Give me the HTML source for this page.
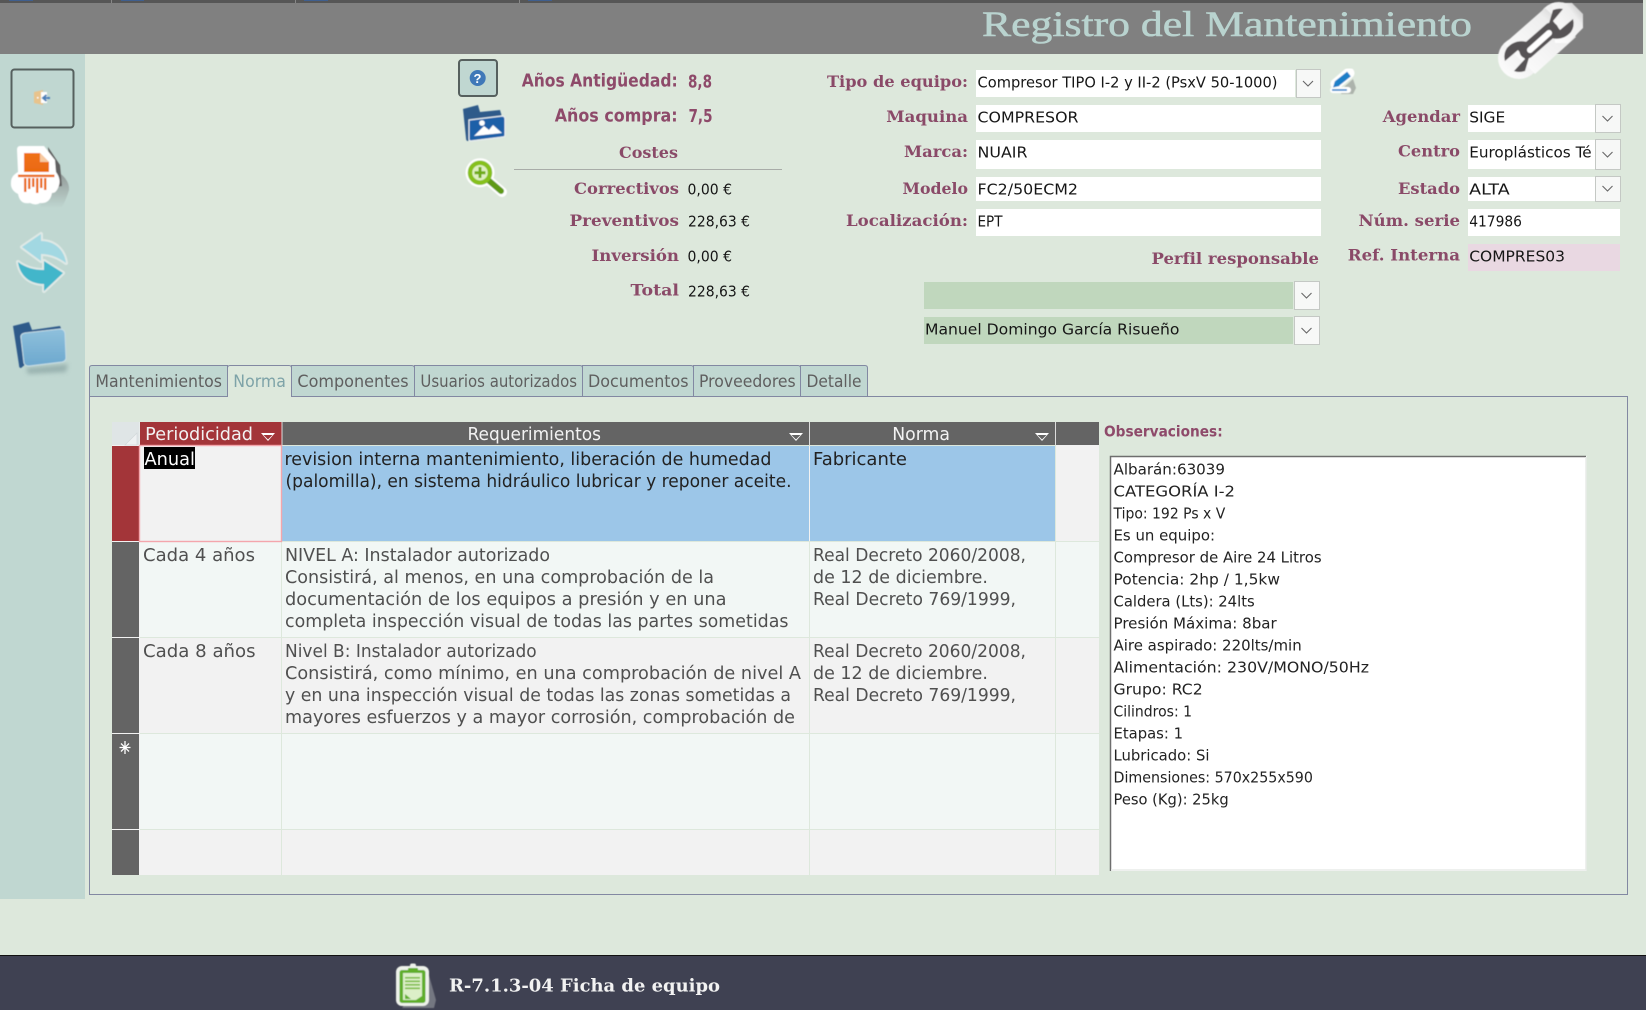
<!DOCTYPE html>
<html lang="es"><head><meta charset="utf-8"><title>Registro del Mantenimiento</title>
<style>
html,body{margin:0;padding:0;width:1646px;height:1010px;overflow:hidden;background:#dde8dc}
svg{display:block}
text{white-space:pre}
.g{font:17.5px "DejaVu Sans",sans-serif;fill:#505050}
.gs{font:17.5px "DejaVu Sans",sans-serif;fill:#222}
.h{font:17.5px "DejaVu Sans",sans-serif;fill:#f2f2f2}
.t{font:16.5px "DejaVu Sans",sans-serif;fill:#5f5f5f}
.f{font:15.5px "DejaVu Sans",sans-serif;fill:#161616}
.o{font:15.5px "DejaVu Sans",sans-serif;fill:#222}
.l{font:bold 16px "DejaVu Serif",serif;fill:#8a4a68}
.b{font:bold 18px "DejaVu Sans",sans-serif;fill:#8e4a6a}
</style></head><body>
<svg xmlns="http://www.w3.org/2000/svg" width="1646" height="1010" viewBox="0 0 1646 1010">
<defs>
<filter id="s" x="-20%" y="-20%" width="140%" height="140%"><feGaussianBlur stdDeviation=".45"/></filter>
<filter id="sh" x="-30%" y="-30%" width="160%" height="160%"><feGaussianBlur stdDeviation="2"/></filter>
<linearGradient id="fb" x1="0" y1="0" x2="0" y2="1"><stop offset="0" stop-color="#8fc0dc"/><stop offset="1" stop-color="#6ca8ce"/></linearGradient>
<linearGradient id="wr" x1="0" y1="1" x2="1" y2="0"><stop offset="0" stop-color="#fff"/><stop offset=".7" stop-color="#eee"/><stop offset="1" stop-color="#bbb"/></linearGradient>
<linearGradient id="or" x1="0" y1="0" x2="0" y2="1"><stop offset="0" stop-color="#f0701a"/><stop offset="1" stop-color="#ea6a10"/></linearGradient>
<linearGradient id="shd" x1="0" y1="0" x2="0" y2="1"><stop offset="0" stop-color="#8a8f8e"/><stop offset="1" stop-color="#c0d7d1"/></linearGradient>
</defs>

<!-- background -->
<rect width="1646" height="1010" fill="#dde8dc"/>
<rect x="0" y="0" width="1643" height="54" fill="#808080"/>
<rect x="0" y="0" width="1643" height="3" fill="#565656"/>
<g fill="#3f5f8f"><rect x="9" y="0" width="24" height="1"/><rect x="121" y="0" width="23" height="1"/><rect x="304" y="0" width="24" height="1"/><rect x="528" y="0" width="24" height="1"/></g>
<g fill="#888"><rect x="111" y="0" width="1" height="3"/><rect x="295" y="0" width="1" height="3"/><rect x="519" y="0" width="1" height="3"/></g>
<rect x="0" y="54" width="85" height="845" fill="#c0d7d1"/>
<rect x="0" y="956" width="1646" height="54" fill="#3f4152"/>
<rect x="0" y="955" width="1646" height="1" fill="#111"/>

<!-- title -->
<text x="982" y="36" textLength="490" lengthAdjust="spacingAndGlyphs" style="font:36px 'Liberation Serif',serif;fill:#b9d3cf;stroke:#b9d3cf;stroke-width:.55">Registro del Mantenimiento</text>

<!-- wrench -->
<g filter="url(#s)">
<g fill="url(#wr)" stroke="none">
<circle cx="1519" cy="58" r="21"/><circle cx="1559" cy="23" r="21"/>
<path d="M1504 44 L1545 8 L1576 37 L1535 74Z"/>
<path d="M1552 3 L1572 3 L1583 14 L1583 28 L1568 43 L1555 43Z"/>
</g>
<path d="M1527 51 L1551 30" fill="none" stroke="#565254" stroke-width="15" stroke-linecap="round"/>
<path d="M1547 30 L1553 10 Q1558 8 1563 9 L1553 21 L1560 30 L1573 19 Q1575 26 1571 32 Q1563 41 1551 38Z" fill="#565254"/>
<path d="M1531 51 L1525 71 Q1519 73 1514 71 L1525 59 L1518 50 L1505 61 Q1503 54 1507 48 Q1515 39 1527 42Z" fill="#565254"/>
<path d="M1530 50 L1549 33" stroke="#fff" stroke-width="6" stroke-linecap="round"/>
</g>

<!-- sidebar button + door -->
<rect x="11.500" y="69.500" width="62" height="58" rx="3" fill="#c0d7d1" stroke="#56605e" stroke-width="2"/>
<g filter="url(#s)">
<path d="M34 92 L43 90 V105 L34 103Z" fill="#e8c38c"/>
<rect x="41" y="92" width="6" height="11" fill="#fff"/>
<path d="M50 98 H44 M46.500 95 L43 98 L46.500 101" fill="none" stroke="#4a7fb8" stroke-width="2"/>
<rect x="37" y="97" width="1.500" height="1.500" fill="#fff"/>
</g>

<!-- shredder -->
<g filter="url(#s)">
<path d="M52 168 Q70 178 69 190 Q66 200 62 207 L40 208 L48 175Z" fill="url(#shd)"/>
<path d="M48 147 L60 165 L62 186 L50 188 Z" fill="#5f5f5f"/>
<path d="M20 146 H44 L55 160 L56 172 Q62 180 58 188 Q56 193 52 193 Q50 204 40 203 Q36 206 30 203 Q20 205 18 194 Q10 190 11 182 Q11 176 18 172 L17 150 Q17 146 20 146Z" fill="#fff"/>
<path d="M24 153 H40 L49 162 V172 H24Z" fill="url(#or)"/>
<path d="M40 153 V162 H49Z" fill="#f6c9a0"/>
<rect x="18" y="174.700" width="36.500" height="2.400" fill="#ea6a10"/>
<g fill="#ea6a10"><rect x="24" y="178" width="2.400" height="14"/><rect x="28" y="178" width="2.400" height="11"/><rect x="32" y="178" width="2.400" height="9"/><rect x="36" y="178" width="2.400" height="15"/><rect x="40" y="178" width="2.400" height="10"/><rect x="44" y="178" width="2.400" height="12"/></g>
</g>

<!-- sync -->
<g filter="url(#s)" stroke="#dfe9e6" stroke-width="4" stroke-linejoin="round" style="paint-order:stroke">
<path d="M22 247 L41 234 L41 241 C54 241 64 249 66 263 C58 257 50 254 41 254 L41 261 Z" fill="#a2d8e2"/>
<path d="M63 273 L44 291 L44 284 C30 284 20 276 18 262 C26 268 34 270 44 270 L44 261 Z" fill="#43b6ca"/>
</g>

<!-- folder -->
<g filter="url(#s)">
<path d="M26 368 L68 364 L66 372 L28 374Z" fill="#7f9a9a" opacity=".6" filter="url(#sh)"/>
<path d="M13 326 L29 322 L32 330 L60 326 L63 333 L21 368 Q19 368 19 365Z" fill="#2f5a8a"/>
<path d="M21 338 Q20 334 25 333 L60 329 Q64 329 65 333 L66 358 Q66 361 62 362 L29 366 Q25 366 24 363Z" fill="url(#fb)" stroke="#c6dde6" stroke-width="1"/>
</g>

<!-- help -->
<rect x="459" y="60" width="38" height="36" rx="3" fill="#c0d7d1" stroke="#56605e" stroke-width="2"/>
<circle cx="477.700" cy="78" r="8" fill="#3f78b8"/>
<text x="473.500" y="83" style="font:bold 13px 'Liberation Sans',sans-serif;fill:#fff">?</text>

<!-- image folder -->
<g filter="url(#s)">
<path d="M463 109 L478 105 L480 112 L500 110 L503 120 L468 141 Q466 141 466 138Z" fill="#2f5a8a"/>
<path d="M469 120 L502 116 Q505 116 505 119 L505 135 Q505 137 503 137 L471 141 Q469 141 469 139Z" fill="#1a5fa8" stroke="#e8eef0" stroke-width="1.200"/>
<circle cx="482" cy="123" r="2.800" fill="#fff"/>
<path d="M474 136 L484 126 L489 130 L493 125 L502 133Z" fill="#fff"/>
</g>

<!-- zoom -->
<g filter="url(#s)">
<path d="M487 179 L502 192" stroke="#fff" stroke-width="10" stroke-linecap="round"/>
<circle cx="480" cy="172.700" r="14.500" fill="#fff"/>
<path d="M487 179 L501 191" stroke="#5e9a16" stroke-width="6" stroke-linecap="round"/>
<circle cx="480" cy="172.700" r="10" fill="#dff0c0" stroke="#86c01a" stroke-width="4.500"/>
<path d="M480 167 V178 M474.500 172.700 H485.500" stroke="#6eab14" stroke-width="3"/>
</g>

<!-- pen -->
<g filter="url(#s)">
<path d="M1343 88 L1353 79 L1356 88 L1353 94 H1341Z" fill="#a0a6a0" opacity=".8"/>
<path d="M1336 84 L1349 73" stroke="#fff" stroke-width="11" stroke-linecap="round"/>
<path d="M1333 90 H1348" stroke="#fff" stroke-width="6" stroke-linecap="round"/>
<path d="M1337 83.500 L1349 74" stroke="#1f7fc8" stroke-width="6"/>
<path d="M1333 87.500 L1335 81 L1339.500 86Z" fill="#1f7fc8"/>
<path d="M1332 90 H1347" stroke="#1f7fc8" stroke-width="1.600"/>
</g>

<!-- left labels -->
<text class="b" x="521.700" y="86.700" textLength="156" lengthAdjust="spacingAndGlyphs">Años Antigüedad:</text>
<text class="b" x="688" y="87.500" textLength="24" lengthAdjust="spacingAndGlyphs">8,8</text>
<text class="b" x="554.700" y="121.500" textLength="123" lengthAdjust="spacingAndGlyphs">Años compra:</text>
<text class="b" x="688.500" y="122" textLength="24" lengthAdjust="spacingAndGlyphs">7,5</text>
<text class="l" x="619" y="158" textLength="59" lengthAdjust="spacingAndGlyphs">Costes</text>
<rect x="514" y="169" width="268" height="1" fill="#a8aca8"/>
<text class="l" x="574" y="194" textLength="105" lengthAdjust="spacingAndGlyphs">Correctivos</text>
<text class="f" x="687.500" y="194.700" textLength="44.500" lengthAdjust="spacingAndGlyphs">0,00 €</text>
<text class="l" x="569.500" y="226" textLength="109.500" lengthAdjust="spacingAndGlyphs">Preventivos</text>
<text class="f" x="688" y="226.700" textLength="62" lengthAdjust="spacingAndGlyphs">228,63 €</text>
<text class="l" x="591.500" y="261" textLength="87.500" lengthAdjust="spacingAndGlyphs">Inversión</text>
<text class="f" x="687.500" y="261.700" textLength="44.500" lengthAdjust="spacingAndGlyphs">0,00 €</text>
<text class="l" x="630.500" y="295.700" textLength="48.500" lengthAdjust="spacingAndGlyphs">Total</text>
<text class="f" x="688" y="296.500" textLength="62" lengthAdjust="spacingAndGlyphs">228,63 €</text>

<!-- form labels -->
<text class="l" x="827" y="87" textLength="141" lengthAdjust="spacingAndGlyphs">Tipo de equipo:</text>
<text class="l" x="886.300" y="122" textLength="81.700" lengthAdjust="spacingAndGlyphs">Maquina</text>
<text class="l" x="904" y="157" textLength="64" lengthAdjust="spacingAndGlyphs">Marca:</text>
<text class="l" x="902.500" y="194" textLength="65.500" lengthAdjust="spacingAndGlyphs">Modelo</text>
<text class="l" x="846" y="226" textLength="122" lengthAdjust="spacingAndGlyphs">Localización:</text>
<text class="l" x="1151.500" y="264" textLength="167.500" lengthAdjust="spacingAndGlyphs">Perfil responsable</text>
<text class="l" x="1382.800" y="122" textLength="77.200" lengthAdjust="spacingAndGlyphs">Agendar</text>
<text class="l" x="1398" y="156.700" textLength="62" lengthAdjust="spacingAndGlyphs">Centro</text>
<text class="l" x="1398" y="194" textLength="62" lengthAdjust="spacingAndGlyphs">Estado</text>
<text class="l" x="1358.500" y="226" textLength="101.500" lengthAdjust="spacingAndGlyphs">Núm. serie</text>
<text class="l" x="1347.800" y="260.700" textLength="112.200" lengthAdjust="spacingAndGlyphs">Ref. Interna</text>

<!-- inputs -->
<g fill="#fff">
<rect x="976" y="70" width="319" height="27"/>
<rect x="976" y="105" width="345" height="27"/>
<rect x="976" y="140" width="345" height="29"/>
<rect x="976" y="177" width="345" height="24"/>
<rect x="976" y="209" width="345" height="27"/>
<rect x="1468" y="105" width="127" height="27"/>
<rect x="1468" y="140" width="127" height="29"/>
<rect x="1468" y="177" width="127" height="24"/>
<rect x="1468" y="209" width="152" height="27"/>
</g>
<rect x="1468" y="244" width="152" height="27" fill="#e9d8e2"/>
<rect x="924" y="282" width="369" height="27" fill="#c0d7bd"/>
<rect x="924" y="317" width="369" height="27" fill="#c0d7bd"/>

<!-- combo buttons -->
<g fill="#f7f8f7" stroke="#c4c8c4" stroke-width="1">
<rect x="1296.500" y="69.500" width="24" height="28"/>
<rect x="1595.500" y="104.500" width="25" height="28"/>
<rect x="1595.500" y="139.500" width="25" height="30"/>
<rect x="1595.500" y="176.500" width="25" height="25"/>
<rect x="1294.500" y="281.500" width="25" height="28"/>
<rect x="1294.500" y="316.500" width="25" height="28"/>
</g>
<g fill="none" stroke="#666" stroke-width="1.100">
<path d="M1303 81 L1308 86 L1313 81"/>
<path d="M1602.500 116 L1607.500 121 L1612.500 116"/>
<path d="M1602.500 152 L1607.500 157 L1612.500 152"/>
<path d="M1602.500 186 L1607.500 191 L1612.500 186"/>
<path d="M1301.500 293 L1306.500 298 L1311.500 293"/>
<path d="M1301.500 328 L1306.500 333 L1311.500 328"/>
</g>

<!-- input text -->
<text class="f" x="977.500" y="87.500" textLength="300" lengthAdjust="spacingAndGlyphs">Compresor TIPO I-2 y II-2 (PsxV 50-1000)</text>
<text class="f" x="977.500" y="122.500" textLength="101" lengthAdjust="spacingAndGlyphs">COMPRESOR</text>
<text class="f" x="977.500" y="157.500" textLength="50" lengthAdjust="spacingAndGlyphs">NUAIR</text>
<text class="f" x="977.500" y="194.500" textLength="100.500" lengthAdjust="spacingAndGlyphs">FC2/50ECM2</text>
<text class="f" x="977.500" y="226.700" textLength="25" lengthAdjust="spacingAndGlyphs">EPT</text>
<text class="f" x="925" y="334.500" textLength="254.400" lengthAdjust="spacingAndGlyphs">Manuel Domingo García Risueño</text>
<text class="f" x="1469.200" y="122.500" textLength="36" lengthAdjust="spacingAndGlyphs">SIGE</text>
<text class="f" x="1469.200" y="157.500" textLength="122.500" lengthAdjust="spacingAndGlyphs">Europlásticos Té</text>
<text class="f" x="1469.200" y="194.500" textLength="40.500" lengthAdjust="spacingAndGlyphs">ALTA</text>
<text class="f" x="1469.200" y="226.700" textLength="52.800" lengthAdjust="spacingAndGlyphs">417986</text>
<text class="f" x="1469.200" y="261.500" textLength="95.800" lengthAdjust="spacingAndGlyphs">COMPRES03</text>

<!-- panel + tabs -->
<rect x="89.500" y="396.500" width="1538" height="498" fill="#dde8dc" stroke="#8288a2" stroke-width="1"/>
<g fill="#c0d7d1" stroke="#8288a2" stroke-width="1">
<path d="M89.500 396.500 V368 Q89.500 365.500 92 365.500 H227.500 V396.500Z"/>
<path d="M291.500 396.500 V365.500 H411.500 Q414.500 365.500 414.500 368 V396.500Z"/>
<path d="M414.500 396.500 V365.500 H580 Q582.500 365.500 582.500 368 V396.500Z"/>
<path d="M582.500 396.500 V365.500 H691 Q693.500 365.500 693.500 368 V396.500Z"/>
<path d="M693.500 396.500 V365.500 H798 Q800.500 365.500 800.500 368 V396.500Z"/>
<path d="M800.500 396.500 V365.500 H865 Q867.500 365.500 867.500 368 V396.500Z"/>
</g>
<path d="M227.500 397 V368 Q227.500 365.500 230 365.500 H289 Q291.500 365.500 291.500 368 V397" fill="#dde8dc" stroke="#8288a2"/>
<rect x="228" y="396" width="63" height="2" fill="#dde8dc"/>
<text class="t" x="95.400" y="387.200" textLength="126.600" lengthAdjust="spacingAndGlyphs">Mantenimientos</text>
<text class="t" x="233.300" y="387.200" textLength="52.600" lengthAdjust="spacingAndGlyphs" style="fill:#7ea3a8">Norma</text>
<text class="t" x="297.400" y="387.200" textLength="111.200" lengthAdjust="spacingAndGlyphs">Componentes</text>
<text class="t" x="420.400" y="387.200" textLength="156.600" lengthAdjust="spacingAndGlyphs">Usuarios autorizados</text>
<text class="t" x="588" y="387.200" textLength="100.600" lengthAdjust="spacingAndGlyphs">Documentos</text>
<text class="t" x="699" y="387.200" textLength="96.700" lengthAdjust="spacingAndGlyphs">Proveedores</text>
<text class="t" x="806.500" y="387.200" textLength="55" lengthAdjust="spacingAndGlyphs">Detalle</text>

<!-- grid -->
<rect x="112" y="422" width="987" height="453" fill="#f2f2f2"/>
<rect x="112" y="422" width="27.500" height="23" fill="#dfe5e6"/>
<path d="M125 445 L137 433 V445Z" fill="#eef1f2" stroke="#d2d8da" stroke-width=".7"/>
<rect x="140" y="422" width="141.500" height="23" fill="#a33539"/>
<rect x="282" y="422" width="527" height="23" fill="#646464"/>
<rect x="810" y="422" width="245" height="23" fill="#646464"/>
<rect x="1056" y="422" width="43" height="23" fill="#646464"/>
<!-- selectors -->
<rect x="112" y="446" width="27" height="95" fill="#a33539"/>
<rect x="112" y="542" width="27" height="95" fill="#646464"/>
<rect x="112" y="638" width="27" height="95" fill="#646464"/>
<rect x="112" y="734" width="27" height="95" fill="#646464"/>
<rect x="112" y="830" width="27" height="45" fill="#646464"/>
<!-- rows -->
<rect x="282" y="446" width="527" height="95" fill="#9cc6e8"/>
<rect x="810" y="446" width="245" height="95" fill="#9cc6e8"/>
<rect x="140" y="542" width="959" height="95" fill="#f2f7f5"/>
<rect x="140" y="638" width="959" height="95" fill="#f2f2f2"/>
<rect x="140" y="734" width="959" height="95" fill="#f2f7f5"/>
<g fill="#dde8dc">
<rect x="281" y="542" width="1" height="333"/><rect x="809" y="542" width="1" height="333"/><rect x="1055" y="422" width="1" height="453"/>
<rect x="140" y="541" width="959" height="1"/><rect x="140" y="637" width="959" height="1"/><rect x="140" y="733" width="959" height="1"/><rect x="140" y="829" width="959" height="1"/>
</g>
<rect x="140" y="445" width="915" height="1" fill="#dde8dc"/>
<rect x="281.500" y="422" width="1" height="23" fill="#dcdcdc"/><rect x="809" y="422" width="1" height="23" fill="#dcdcdc"/><rect x="1055" y="422" width="1" height="23" fill="#dcdcdc"/>
<!-- active cell -->
<rect x="139.500" y="445.500" width="142" height="96" fill="#f2f2f2" stroke="#f4a6ac" stroke-width="1.400"/>
<rect x="144" y="447" width="51" height="22" fill="#000"/>

<!-- filter arrows -->
<g>
<path d="M261 433 H275 L268 441Z" fill="#fff"/><path d="M263.500 435 H272.500 L268 439.500Z" fill="#a33539"/>
<path d="M789 433 H803 L796 441Z" fill="#fff"/><path d="M791.500 435 H800.500 L796 439.500Z" fill="#646464"/>
<path d="M1035 433 H1049 L1042 441Z" fill="#fff"/><path d="M1037.500 435 H1046.500 L1042 439.500Z" fill="#646464"/>
</g>
<!-- asterisk -->
<path d="M125 741 V754 M119.500 747.500 H130.500 M121 743.500 L129 751.500 M129 743.500 L121 751.500" stroke="#fff" stroke-width="1.300"/>

<!-- grid text -->
<text class="h" x="145.200" y="440" textLength="107.800" lengthAdjust="spacingAndGlyphs">Periodicidad</text>
<text class="h" x="467.500" y="440" textLength="133.500" lengthAdjust="spacingAndGlyphs">Requerimientos</text>
<text class="h" x="892.200" y="440" textLength="57.800" lengthAdjust="spacingAndGlyphs">Norma</text>

<text x="144.500" y="465" textLength="50.500" lengthAdjust="spacingAndGlyphs" style="font:17.5px 'DejaVu Sans',sans-serif;fill:#fff">Anual</text>
<text class="gs" x="284.500" y="465" textLength="487" lengthAdjust="spacingAndGlyphs">revision interna mantenimiento, liberación de humedad</text>
<text class="gs" x="285.500" y="487" textLength="506" lengthAdjust="spacingAndGlyphs">(palomilla), en sistema hidráulico lubricar y reponer aceite.</text>
<text class="gs" x="813" y="465" textLength="94" lengthAdjust="spacingAndGlyphs">Fabricante</text>

<text class="g" x="143" y="561" textLength="112" lengthAdjust="spacingAndGlyphs">Cada 4 años</text>
<text class="g" x="285" y="561" textLength="265" lengthAdjust="spacingAndGlyphs">NIVEL A: Instalador autorizado</text>
<text class="g" x="285" y="583" textLength="429" lengthAdjust="spacingAndGlyphs">Consistirá, al menos, en una comprobación de la</text>
<text class="g" x="285" y="605" textLength="441.500" lengthAdjust="spacingAndGlyphs">documentación de los equipos a presión y en una</text>
<text class="g" x="285" y="627" textLength="503.500" lengthAdjust="spacingAndGlyphs">completa inspección visual de todas las partes sometidas</text>
<text class="g" x="813" y="561" textLength="213" lengthAdjust="spacingAndGlyphs">Real Decreto 2060/2008,</text>
<text class="g" x="813" y="583" textLength="175" lengthAdjust="spacingAndGlyphs">de 12 de diciembre.</text>
<text class="g" x="813" y="605" textLength="203" lengthAdjust="spacingAndGlyphs">Real Decreto 769/1999,</text>

<text class="g" x="143" y="657" textLength="112.600" lengthAdjust="spacingAndGlyphs">Cada 8 años</text>
<text class="g" x="285" y="657" textLength="251.700" lengthAdjust="spacingAndGlyphs">Nivel B: Instalador autorizado</text>
<text class="g" x="285" y="679" textLength="516" lengthAdjust="spacingAndGlyphs">Consistirá, como mínimo, en una comprobación de nivel A</text>
<text class="g" x="285" y="701" textLength="506" lengthAdjust="spacingAndGlyphs">y en una inspección visual de todas las zonas sometidas a</text>
<text class="g" x="285" y="723" textLength="510" lengthAdjust="spacingAndGlyphs">mayores esfuerzos y a mayor corrosión, comprobación de</text>
<text class="g" x="813" y="657" textLength="213" lengthAdjust="spacingAndGlyphs">Real Decreto 2060/2008,</text>
<text class="g" x="813" y="679" textLength="175" lengthAdjust="spacingAndGlyphs">de 12 de diciembre.</text>
<text class="g" x="813" y="701" textLength="203" lengthAdjust="spacingAndGlyphs">Real Decreto 769/1999,</text>

<!-- observaciones -->
<text x="1104" y="436.700" textLength="118.700" lengthAdjust="spacingAndGlyphs" style="font:bold 15px 'DejaVu Sans',sans-serif;fill:#8e4a6a">Observaciones:</text>
<rect x="1110" y="456" width="476.500" height="415" fill="#fff"/>
<path d="M1110.500 871 V456.500 H1586" fill="none" stroke="#6e6e6e" stroke-width="1.500"/>
<path d="M1111 870 H1586 V457" fill="none" stroke="#e8ece8" stroke-width="1.500"/>
<text class="o" x="1113.500" y="474.500" textLength="111.500" lengthAdjust="spacingAndGlyphs">Albarán:63039</text>
<text class="o" x="1113.500" y="496.500" textLength="121.500" lengthAdjust="spacingAndGlyphs">CATEGORÍA I-2</text>
<text class="o" x="1113.500" y="518.500" textLength="111.800" lengthAdjust="spacingAndGlyphs">Tipo: 192 Ps x V</text>
<text class="o" x="1113.500" y="540.500" textLength="101.500" lengthAdjust="spacingAndGlyphs">Es un equipo:</text>
<text class="o" x="1113.500" y="562.500" textLength="208.100" lengthAdjust="spacingAndGlyphs">Compresor de Aire 24 Litros</text>
<text class="o" x="1113.500" y="584.500" textLength="166.500" lengthAdjust="spacingAndGlyphs">Potencia: 2hp / 1,5kw</text>
<text class="o" x="1113.500" y="606.500" textLength="141.200" lengthAdjust="spacingAndGlyphs">Caldera (Lts): 24lts</text>
<text class="o" x="1113.500" y="628.500" textLength="163.200" lengthAdjust="spacingAndGlyphs">Presión Máxima: 8bar</text>
<text class="o" x="1113.500" y="650.500" textLength="188.200" lengthAdjust="spacingAndGlyphs">Aire aspirado: 220lts/min</text>
<text class="o" x="1113.500" y="672.500" textLength="255.500" lengthAdjust="spacingAndGlyphs">Alimentación: 230V/MONO/50Hz</text>
<text class="o" x="1113.500" y="694.500" textLength="89.200" lengthAdjust="spacingAndGlyphs">Grupo: RC2</text>
<text class="o" x="1113.500" y="716.500" textLength="78.500" lengthAdjust="spacingAndGlyphs">Cilindros: 1</text>
<text class="o" x="1113.500" y="738.500" textLength="69.500" lengthAdjust="spacingAndGlyphs">Etapas: 1</text>
<text class="o" x="1113.500" y="760.500" textLength="96" lengthAdjust="spacingAndGlyphs">Lubricado: Si</text>
<text class="o" x="1113.500" y="782.500" textLength="199.400" lengthAdjust="spacingAndGlyphs">Dimensiones: 570x255x590</text>
<text class="o" x="1113.500" y="804.500" textLength="115.200" lengthAdjust="spacingAndGlyphs">Peso (Kg): 25kg</text>

<!-- bottom bar -->
<g filter="url(#s)">
<path d="M428 972 L436 1000 L434 1008 L402 1008Z" fill="#8a8d96" opacity=".7"/>
<rect x="396" y="966" width="33" height="40" rx="6" fill="#eef2ea"/>
<rect x="410" y="963.500" width="6" height="5" rx="2" fill="#eef2ea"/>
<rect x="399.500" y="970" width="26" height="33" rx="2.500" fill="#5fae2a"/>
<path d="M403 973 H422 V996 L416 1000 H403Z" fill="#dcefc8"/>
<rect x="408" y="968" width="10" height="4" rx="1" fill="#5fae2a"/>
<g fill="#78bb3c"><rect x="405" y="977" width="15" height="1.600"/><rect x="405" y="980.500" width="15" height="1.600"/><rect x="405" y="984" width="15" height="1.600"/><rect x="405" y="987.500" width="15" height="1.600"/></g>
<path d="M405 994 L411 999 H405Z" fill="#5fae2a"/>
</g>
<text x="449" y="991.700" textLength="271" lengthAdjust="spacingAndGlyphs" style="font:bold 18px 'DejaVu Serif',serif;fill:#f2f2f2">R-7.1.3-04 Ficha de equipo</text>
</svg>
</body></html>
